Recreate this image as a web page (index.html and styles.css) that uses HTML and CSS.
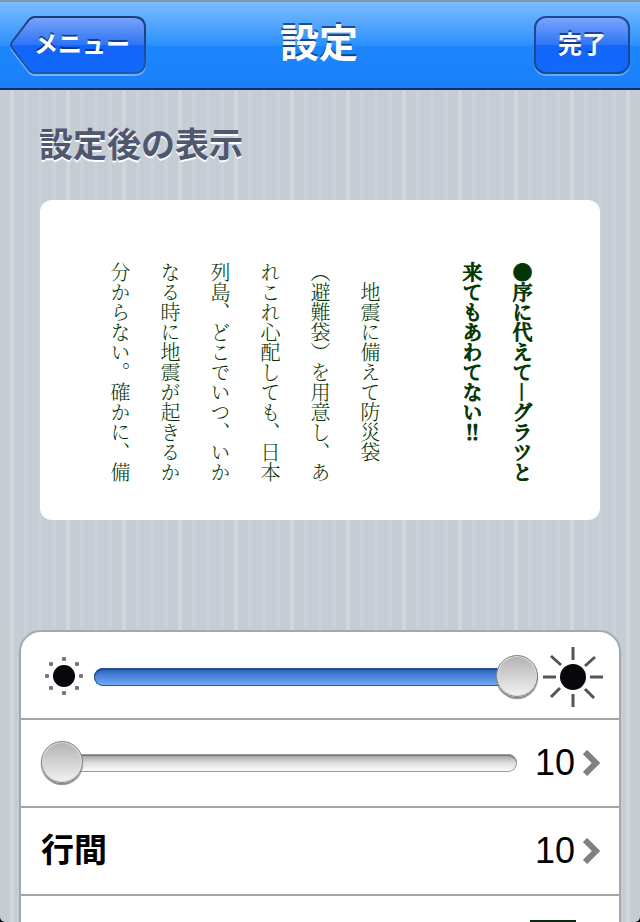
FILE: index.html
```html
<!DOCTYPE html>
<html lang="ja">
<head>
    <meta charset="UTF-8">
    <meta name="viewport" content="width=device-width, initial-scale=1.0">
    <title>設定</title>
    <link rel="stylesheet" href="styles.css">
</head>
<body>
    <header class="navbar">
        <button type="button" class="nav-button back-button">
            <svg class="back-shape" width="138" height="62" viewBox="0 0 138 62" aria-hidden="true">
                <defs>
                    <linearGradient id="backFill" x1="0" y1="0" x2="0" y2="1">
                        <stop offset="0" stop-color="#79a4fb"/>
                        <stop offset="0.5" stop-color="#2e74f6"/>
                        <stop offset="0.51" stop-color="#1166f8"/>
                        <stop offset="1" stop-color="#1368fd"/>
                    </linearGradient>
                    <linearGradient id="backLine" x1="0" y1="0" x2="0" y2="1">
                        <stop offset="0" stop-color="#1c3d75"/>
                        <stop offset="1" stop-color="#2056ad"/>
                    </linearGradient>
                </defs>
                <path d="M25 3 H124 Q135 3 135 14 V48 Q135 59 124 59 H25 Q21 59 18 55 L2 34 Q0 31 2 28 L18 7 Q21 3 25 3 Z" fill="none" stroke="#6db5ff" stroke-width="2"/>
                <path d="M25 1 H124 Q135 1 135 12 V46 Q135 57 124 57 H25 Q21 57 18 53 L2 32 Q0 29 2 26 L18 5 Q21 1 25 1 Z" fill="url(#backFill)" stroke="url(#backLine)" stroke-width="2"/>
            </svg>
            <span class="back-label">メニュー</span>
        </button>
        <h1>設定</h1>
        <button type="button" class="nav-button done-button">完了</button>
    </header>

    <main>
        <h2>設定後の表示</h2>

        <section class="preview">
            <div class="vertical">
                <h3>●序に代えて―グラツと<br>来てもあわてない‼</h3>
                <p>　地震に備えて防災袋<br>（避難袋）を用意し、あ<br>れこれ心配しても、日本<br>列島、どこでいつ、いか<br>なる時に地震が起きるか<br>分からない。確かに、備</p>
            </div>
        </section>

        <section class="settings">
            <div class="row">
                <svg class="sun-small" width="40" height="40" viewBox="0 0 40 40" aria-hidden="true">
                    <circle cx="20" cy="20" r="11" fill="#08080c"/>
                    <g fill="#777">
                        <rect x="18" y="1" width="4" height="4" rx="1"/>
                        <rect x="18" y="35" width="4" height="4" rx="1"/>
                        <rect x="1" y="18" width="4" height="4" rx="1"/>
                        <rect x="35" y="18" width="4" height="4" rx="1"/>
                        <rect x="5" y="6" width="4" height="4" rx="1"/>
                        <rect x="31" y="6" width="4" height="4" rx="1"/>
                        <rect x="5" y="30" width="4" height="4" rx="1"/>
                        <rect x="31" y="30" width="4" height="4" rx="1"/>
                    </g>
                </svg>
                <input type="range" class="slider slider-blue" min="0" max="100" value="100" aria-label="明るさ">
                <svg class="sun-large" width="62" height="62" viewBox="0 0 62 62" aria-hidden="true">
                    <circle cx="31" cy="31" r="13" fill="#08080c"/>
                    <g stroke="#555" stroke-width="3">
                        <path d="M31 1V14M31 48V61M1 31H14M48 31H61"/>
                        <path d="M9 10L19 19M53 11L43 20M9 51L18 42M52 52L43 43"/>
                    </g>
                </svg>
            </div>
            <div class="row">
                <input type="range" class="slider slider-grey" min="10" max="40" value="10" aria-label="文字サイズ">
                <span class="value">10</span>
                <svg class="chevron" width="18" height="26" viewBox="0 0 18 26" aria-hidden="true">
                    <path d="M2 2L13 13L2 24" fill="none" stroke="#808080" stroke-width="6"/>
                </svg>
            </div>
            <div class="row">
                <span class="label">行間</span>
                <span class="value">10</span>
                <svg class="chevron" width="18" height="26" viewBox="0 0 18 26" aria-hidden="true">
                    <path d="M2 2L13 13L2 24" fill="none" stroke="#808080" stroke-width="6"/>
                </svg>
            </div>
            <div class="row">
                <span class="swatch"></span>
            </div>
        </section>
    </main>
</body>
</html>
```

FILE: styles.css
```css
* {
    margin: 0;
    padding: 0;
    box-sizing: border-box;
}

html {
    background: #000;
}

body {
    height: 100vh;
    overflow: hidden;
    border-radius: 0 0 5px 5px;
    font-family: "Liberation Sans", "Noto Sans CJK JP", sans-serif;
    background-color: #c5ccd4;
    background-image: repeating-linear-gradient(to right,
        transparent 0, transparent 10px, #cfd6dc 10px, #cfd6dc 14px,
        transparent 14px, transparent 24px, #cad1d8 24px, #cad1d8 28px,
        transparent 28px, transparent 38px, #cad1d8 38px, #cad1d8 42px,
        transparent 42px, transparent 52px, #cad1d8 52px, #cad1d8 56px);
}

/* Navigation bar */
.navbar {
    display: grid;
    grid-template-columns: 1fr auto 1fr;
    align-items: center;
    height: 90px;
    padding: 0 10px;
    border-top: 2px solid #7d98ab;
    border-bottom: 2px solid #0b3268;
    background: linear-gradient(#7dbcfe 0%, #4ba2fd 30%, #2c91fc 50%, #1b87fd 52%, #1b7ffb 100%);
    color: #fff;
    text-shadow: 0 -2px 0 rgba(0, 20, 70, 0.6);
}

.navbar h1 {
    font-size: 39px;
    line-height: 58px;
    padding: 0 2px 2px 0;
}

.nav-button {
    height: 58px;
    border: none;
    background: none;
    color: inherit;
    font-family: inherit;
    font-size: 24px;
    font-weight: bold;
    text-shadow: inherit;
    cursor: pointer;
}

.back-button {
    display: grid;
    justify-self: start;
    align-items: start;
}

.back-shape,
.back-label {
    grid-area: 1 / 1;
}

.back-label {
    padding-left: 6px;
    line-height: 58px;
}

.done-button {
    justify-self: end;
    width: 96px;
    padding-bottom: 6px;
    border: 2px solid #1d4993;
    border-radius: 12px;
    background: linear-gradient(#79a4fb 0%, #2e74f6 50%, #1166f8 51%, #1368fd 100%);
    box-shadow: 0 2px 0 #5eabfd;
}

/* Preview */
main {
    padding: 30px 20px 0;
}

h2 {
    padding-left: 19px;
    font-size: 34px;
    line-height: 50px;
    color: #4f586e;
    text-shadow: 0 2px 0 #fff;
}

.preview {
    display: flex;
    justify-content: flex-end;
    height: 320px;
    margin: 30px 20px 110px;
    padding: 62px 53px 0 0;
    border-radius: 12px;
    background: #fff;
}

.vertical {
    color: #043604;
    font-family: "Noto Serif CJK JP", "Noto Sans CJK JP", serif;
    writing-mode: vertical-rl;
}

.vertical h3,
.vertical p {
    font-size: 20px;
    line-height: 50px;
    white-space: nowrap;
}

.vertical h3 {
    margin-left: 52px;
    font-weight: 500;
    -webkit-text-stroke: 1px #043604;
}

.vertical p {
    font-weight: 300;
}

/* Settings list */
.settings {
    margin: 0 -1px;
    border: 2px solid #a6a9ac;
    border-radius: 22px 22px 0 0;
    background: #fff;
}

.row {
    display: flex;
    align-items: center;
    height: 86px;
    padding: 0 18px 0 20px;
}

.row + .row {
    height: 88px;
    border-top: 2px solid #a6a6a6;
}

.label {
    font-size: 33px;
    font-weight: bold;
    line-height: 44px;
}

.value {
    margin-left: auto;
    font-size: 36px;
}

.chevron {
    margin-left: 8px;
}

.swatch {
    width: 46px;
    height: 38px;
    margin-left: auto;
    margin-right: 25px;
    background: #0d290d;
}

/* Sliders */
.slider {
    flex: 1;
    min-width: 0;
    height: 46px;
    appearance: none;
    background: none;
}

.slider::-webkit-slider-runnable-track {
    height: 18px;
    border-radius: 9px;
}

.slider-blue::-webkit-slider-runnable-track {
    background: linear-gradient(#2a5cac, #4d88de 50%, #77adfb);
    box-shadow: inset 0 0 0 1px #2c5596, inset 0 2px 1px #1d4485;
}

.slider-grey::-webkit-slider-runnable-track {
    background: linear-gradient(#999, #dedede 50%, #fff);
    box-shadow: inset 0 0 0 1px #999, inset 0 2px 1px #777;
}

.slider::-webkit-slider-thumb {
    width: 42px;
    height: 42px;
    margin-top: -13px;
    appearance: none;
    border: 1px solid #858585;
    border-radius: 50%;
    background: linear-gradient(#b2b2b2, #f2f2f2);
    box-shadow: 0 2px 1px #888, inset 0 0 0 1px #e0e0e0;
}

.slider-blue {
    margin: 4px 4px 0 10px;
}

.sun-small {
    margin: 2px 0 0 3px;
}

.slider-grey {
    margin-right: 18px;
}

.sun-large {
    margin: 4px -3px 0 0;
}
```
